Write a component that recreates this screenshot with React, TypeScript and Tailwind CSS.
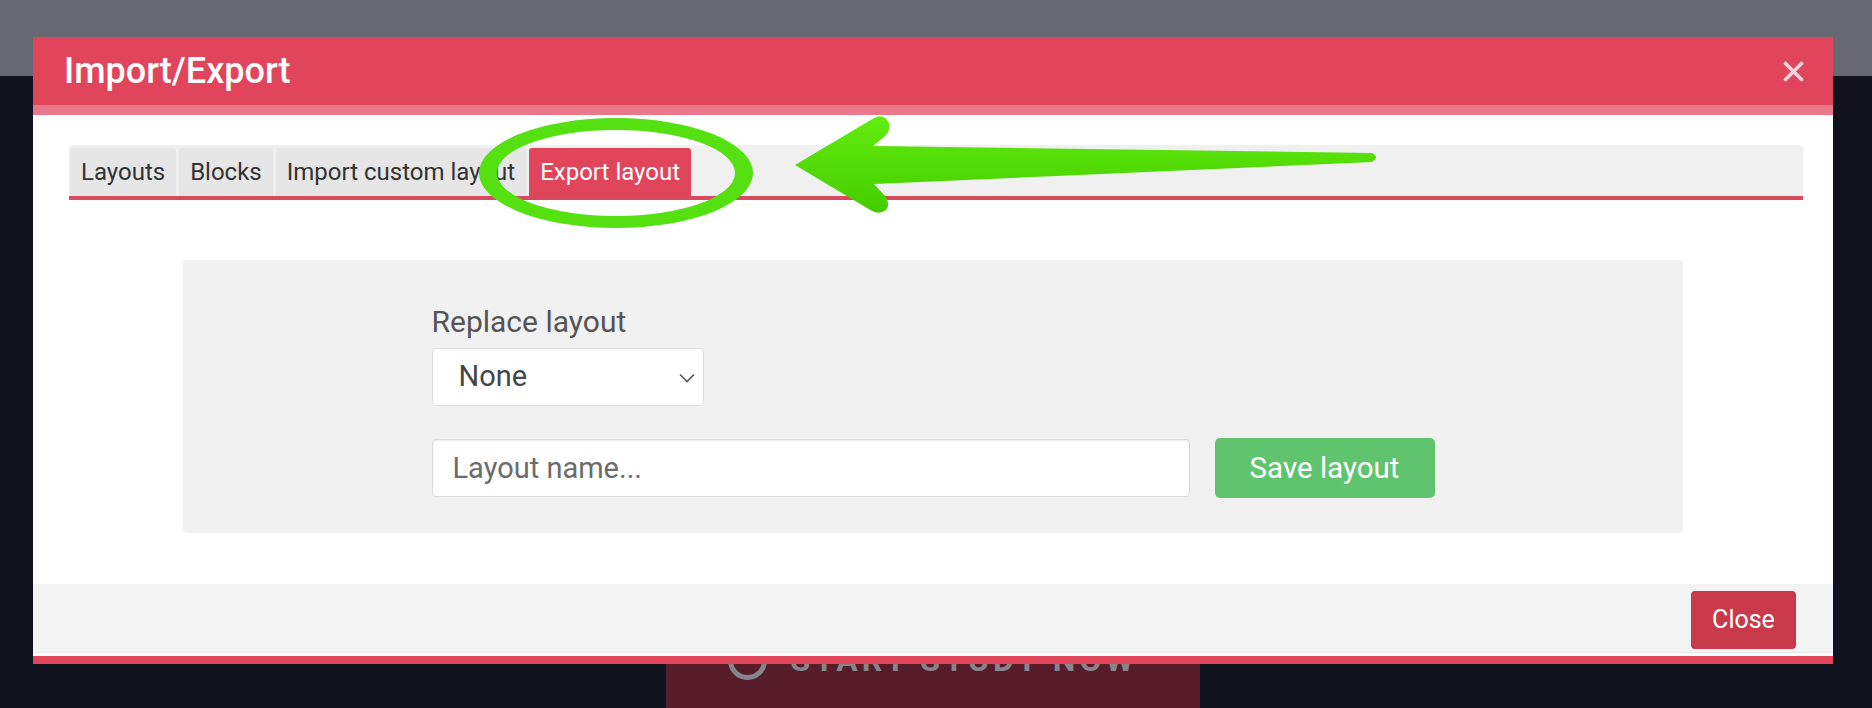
import { useState } from 'react';

const tabs = ['Layouts', 'Blocks', 'Import custom layout', 'Export layout'];

function Chevron() {
  return (
    <svg width="16" height="10" viewBox="0 0 16 10" fill="none">
      <polyline points="1,1.5 8,8.5 15,1.5" stroke="#555" strokeWidth="1.6" />
    </svg>
  );
}

function CloseIcon() {
  return (
    <svg width="21" height="21" viewBox="0 0 21 21">
      <path d="M2.5 2.5 L18.5 18.5 M18.5 2.5 L2.5 18.5" stroke="#fbd3da" strokeWidth="3.6" strokeLinecap="round" />
    </svg>
  );
}

// green annotation drawn on top of the screenshot
function Annotation() {
  return (
    <svg className="absolute inset-0 pointer-events-none" width="1872" height="708" viewBox="0 0 1872 708">
      <defs>
        <linearGradient id="arrowFill" x1="0" y1="0" x2="0" y2="1">
          <stop offset="0" stopColor="#62ec0e" />
          <stop offset="1" stopColor="#45cc00" />
        </linearGradient>
      </defs>
      <path
        fillRule="evenodd"
        fill="#55e012"
        d="M479 173 A137 55 0 1 0 753 173 A137 55 0 1 0 479 173 Z M497 173 A119 43 0 1 0 735 173 A119 43 0 1 0 497 173 Z"
      />
      <path
        fill="url(#arrowFill)"
        d="M795 165 L874 118 Q884 113 889 123 Q891 131 884 137 L873 146 L1372 153 Q1380 157 1372 162 L874 184 L885 196 Q891 204 886 210 Q880 215 872 211 Z"
      />
    </svg>
  );
}

export default function App() {
  const [active, setActive] = useState(3);
  const [name, setName] = useState('');

  return (
    <div className="relative w-full min-h-screen h-[708px] overflow-hidden bg-[#10121d] font-['Roboto',sans-serif]">
      <header className="h-[76px] bg-[#686872]" />
      <main className="pt-[524px] pl-[666px]">
        <div className="w-[534px] h-[120px] bg-[#561c2a] flex items-center justify-center gap-[23px]">
          <span className="w-[39px] h-[39px] rounded-full border-[5px] border-[#85858b]" />
          <span className="text-[32px] font-bold tracking-[4px] text-[#85858b]">START STUDY NOW</span>
        </div>
      </main>

      <div className="absolute inset-0 pl-[33px] pt-[37px]">
        <div className="w-[1800px] bg-white">
          <div className="h-[68px] bg-[#e1455b] flex items-center justify-between pl-[31px] pr-[29px]">
            <h4 className="text-[36px] leading-[43px] font-medium text-white">Import/Export</h4>
            <button className="flex items-center">
              <CloseIcon />
            </button>
          </div>
          <div className="h-[10px] bg-[#e8788a]" />

          <div className="pt-[30px] pb-[51px] pl-[36px] pr-[30px]">
            <div className="flex gap-[3px] bg-[#f0f0f0] rounded-t-[4px] pt-[3px] pl-[1px] border-b-[4px] border-[#d94a5f]">
              {tabs.map((t, i) => (
                <button
                  key={t}
                  onClick={() => setActive(i)}
                  className={
                    i === active
                      ? 'h-[48px] px-[11px] rounded-t-[3px] bg-[#e1455b] text-white text-[24px] leading-[36px]'
                      : 'h-[48px] px-[11px] rounded-t-[3px] bg-[#e6e6e6] text-[#333] text-[24px] leading-[36px]'
                  }
                >
                  {t}
                </button>
              ))}
            </div>

            <div className="mt-[60px] ml-[114px] mr-[120px] rounded-[4px] bg-[#f1f1f1] pt-[44px] pb-[35px] flex justify-center">
              <div className="w-[1003px]">
                <label className="block text-[30px] leading-[36px] text-[#555] mb-[8px]">Replace layout</label>
                <div className="relative w-[272px]">
                  <select className="appearance-none w-[272px] h-[58px] bg-white border border-[#dedede] rounded-[4px] pl-[26px] text-[29px] text-[#454545] outline-none">
                    <option>None</option>
                  </select>
                  <span className="absolute right-[9px] top-[25px] pointer-events-none">
                    <Chevron />
                  </span>
                </div>
                <div className="flex items-center mt-[32px]">
                  <input
                    value={name}
                    onChange={(e) => setName(e.target.value)}
                    placeholder="Layout name..."
                    className="w-[758px] h-[58px] bg-white border border-[#dadada] rounded-[4px] px-[20px] text-[29px] text-[#444] placeholder:text-[#6b6b6b] shadow-[inset_0_1px_2px_rgba(0,0,0,0.08)] outline-none"
                  />
                  <button className="ml-[25px] w-[220px] h-[60px] bg-[#60c46f] text-white text-[29.5px] rounded-[5px]">
                    Save layout
                  </button>
                </div>
              </div>
            </div>
          </div>

          <div className="h-[68px] bg-[#f3f3f3] flex justify-end items-start pt-[7px] pr-[37px]">
            <button className="w-[105px] h-[58px] bg-[#c83a4a] text-white text-[25px] rounded-[4px]">Close</button>
          </div>
          <div className="h-[4px] bg-white border-t border-[#e4e4e4]" />
          <div className="h-[8px] bg-[#e1455b]" />
        </div>
      </div>

      <Annotation />
    </div>
  );
}
